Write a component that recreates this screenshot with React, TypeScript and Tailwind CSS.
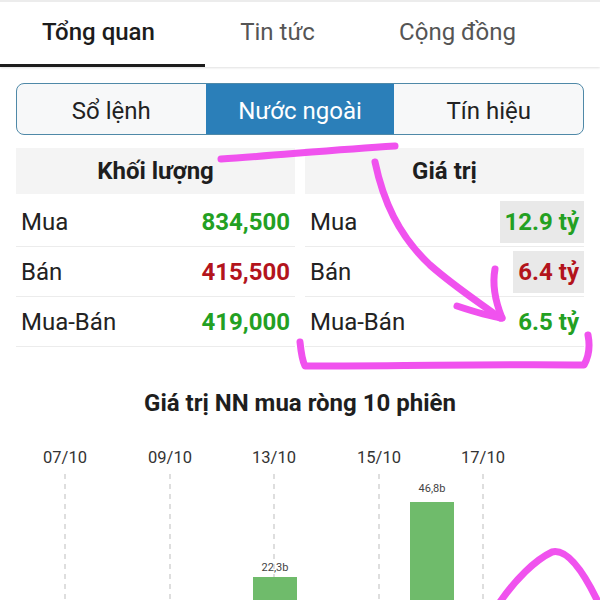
import React from "react";

const font = { fontFamily: "Roboto, 'Noto Sans', sans-serif" };

function TopTabs() {
  return (
    <div className="relative flex h-[67px] border-t-2 border-[#ececec] bg-white shadow-[0_1px_2px_rgba(0,0,0,0.12)]">
      <div className="relative flex w-[205px] items-center justify-center pr-[8px] text-[24px] font-medium text-[#1c1c1c]">
        <span className="-mt-[6px]">Tổng quan</span>
        <div className="absolute bottom-0 left-0 h-[3px] w-full bg-[#1c1c1c]" />
      </div>
      <div className="flex w-[145px] items-center justify-center text-[24px] text-[#555]">
        <span className="-mt-[6px]">Tin tức</span>
      </div>
      <div className="flex w-[215px] items-center justify-center text-[24px] text-[#555]">
        <span className="-mt-[6px]">Cộng đồng</span>
      </div>
    </div>
  );
}

function Segmented() {
  return (
    <div className="mx-[16px] mt-[16px] flex h-[52px] overflow-hidden rounded-[8px] border-[1.5px] border-[#4f89a8] bg-[#f7f8f9]">
      <div className="flex flex-1 items-center justify-center pt-[3px] text-[24px] text-[#222]">Sổ lệnh</div>
      <div className="flex flex-1 items-center justify-center bg-[#2b7fb9] pt-[3px] text-[24px] text-white">Nước ngoài</div>
      <div className="flex flex-1 items-center justify-center pt-[3px] text-[24px] text-[#222]">Tín hiệu</div>
    </div>
  );
}

type Row = { label: string; value: string; color: string; box?: boolean };

function Column({ title, rows }: { title: string; rows: Row[] }) {
  return (
    <div className="flex flex-col">
      <div className="flex h-[46px] items-center justify-center bg-[#f4f4f4] text-[24px] font-bold text-[#1e1e1e]">
        {title}
      </div>
      <div className="mt-[3px] flex flex-col">
        {rows.map((r) => (
          <div
            key={r.label}
            className="flex h-[50px] items-center justify-between border-b border-[#ececec] pl-[5px]"
          >
            <span className="text-[24px] text-[#222]">{r.label}</span>
            {r.box ? (
              <span
                className="flex h-[42px] items-center bg-[#e9e9e9] pl-[5px] pr-[5px] text-[24px] font-bold"
                style={{ color: r.color }}
              >
                {r.value}
              </span>
            ) : (
              <span className="pr-[5px] text-[24px] font-bold" style={{ color: r.color }}>
                {r.value}
              </span>
            )}
          </div>
        ))}
      </div>
    </div>
  );
}

function Chart() {
  const dates = [
    { x: 65, t: "07/10" },
    { x: 170, t: "09/10" },
    { x: 274, t: "13/10" },
    { x: 379, t: "15/10" },
    { x: 483, t: "17/10" },
  ];
  return (
    <div className="mt-[38px] flex flex-col">
      <div className="h-[36px] text-center text-[24px] font-bold leading-[36px] text-[#1e1e1e]">
        Giá trị NN mua ròng 10 phiên
      </div>
      <svg width="600" height="180" className="block" style={font}>
        {dates.map((d) => (
          <g key={d.t}>
            <text x={d.x} y={42} textAnchor="middle" fontSize="16.5" fill="#333">
              {d.t}
            </text>
            <line x1={d.x} y1={53} x2={d.x} y2={180} stroke="#bdbdbd" strokeWidth="1" strokeDasharray="5 5" />
          </g>
        ))}
        <rect x={253} y={156} width={44} height={30} fill="#6fbb6b" />
        <text x={275} y={150} textAnchor="middle" fontSize="11" fill="#444">22,3b</text>
        <rect x={410} y={81} width={44} height={110} fill="#6fbb6b" />
        <text x={432} y={71} textAnchor="middle" fontSize="11" fill="#444">46,8b</text>
      </svg>
    </div>
  );
}

function Annotations() {
  return (
    <svg
      className="pointer-events-none absolute left-0 top-0"
      width="600"
      height="600"
      viewBox="0 0 600 600"
    >
      <g fill="none" stroke="#f052ee" strokeWidth="7" strokeLinecap="round" strokeLinejoin="round">
        <path d="M221 159 C 270 156, 330 150, 395 146" />
        <path d="M375 162 C 383 200, 398 235, 430 265 C 455 287, 480 303, 500 318" />
        <path d="M457 306 C 472 311, 488 316, 502 318" />
        <path d="M495 269 C 492 285, 496 303, 502 318" />
        <path d="M300 342 C 301 352, 302 360, 305 366 C 380 366, 500 364, 584 365 C 589 356, 590 345, 588 335" />
        <path d="M500 602 C 515 580, 535 560, 552 552 C 568 548, 585 575, 598 602" />
      </g>
    </svg>
  );
}

export default function App() {
  return (
    <div className="relative h-[600px] w-[600px] overflow-hidden bg-white" style={font}>
      <TopTabs />
      <Segmented />
      <div className="mt-[13px] grid grid-cols-[279px_279px] gap-x-[10px] px-[16px]">
        <Column
          title="Khối lượng"
          rows={[
            { label: "Mua", value: "834,500", color: "#23a022" },
            { label: "Bán", value: "415,500", color: "#b3141c" },
            { label: "Mua-Bán", value: "419,000", color: "#23a022" },
          ]}
        />
        <Column
          title="Giá trị"
          rows={[
            { label: "Mua", value: "12.9 tỷ", color: "#23a022", box: true },
            { label: "Bán", value: "6.4 tỷ", color: "#b3141c", box: true },
            { label: "Mua-Bán", value: "6.5 tỷ", color: "#23a022" },
          ]}
        />
      </div>
      <Chart />
      <Annotations />
    </div>
  );
}
